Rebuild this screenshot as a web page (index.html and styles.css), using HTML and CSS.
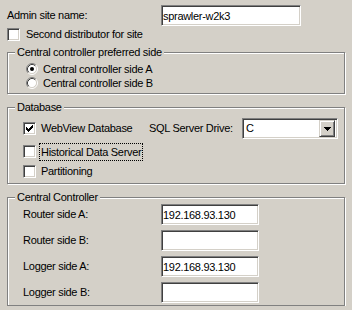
FILE: index.html
```html
<!DOCTYPE html>
<html lang="en">
<head>
  <meta charset="UTF-8" />
  <title>Admin site settings</title>
  <link rel="stylesheet" href="styles.css">
</head>
<body>
  <div class="dialog">
    <div class="row site-row">
      <span class="field-label wide">Admin site name:</span>
      <input class="edit site-name" type="text" value="sprawler-w2k3" />
    </div>

    <div class="row check-row first-check">
      <span class="check"></span>
      <span class="caption">Second distributor for site</span>
    </div>

    <div class="group side-group">
      <div class="group-title">Central controller preferred side</div>
      <div class="row radio-row">
        <span class="radio">
          <svg width="12" height="12" viewBox="0 0 12 12">
            <circle cx="6" cy="6" r="4.5" fill="#fff"/>
            <path d="M2.11 9.89A5.5 5.5 0 0 1 9.89 2.11" stroke="#808080" fill="none"/>
            <path d="M9.89 2.11A5.5 5.5 0 0 1 2.11 9.89" stroke="#fff" fill="none"/>
            <path d="M2.82 9.18A4.5 4.5 0 0 1 9.18 2.82" stroke="#404040" fill="none"/>
            <path d="M9.18 2.82A4.5 4.5 0 0 1 2.82 9.18" stroke="#d4d0c8" fill="none"/>
            <circle cx="6" cy="6" r="2" fill="#000"/>
          </svg>
        </span>
        <span class="caption">Central controller side A</span>
      </div>
      <div class="row radio-row">
        <span class="radio">
          <svg width="12" height="12" viewBox="0 0 12 12">
            <circle cx="6" cy="6" r="4.5" fill="#fff"/>
            <path d="M2.11 9.89A5.5 5.5 0 0 1 9.89 2.11" stroke="#808080" fill="none"/>
            <path d="M9.89 2.11A5.5 5.5 0 0 1 2.11 9.89" stroke="#fff" fill="none"/>
            <path d="M2.82 9.18A4.5 4.5 0 0 1 9.18 2.82" stroke="#404040" fill="none"/>
            <path d="M9.18 2.82A4.5 4.5 0 0 1 2.82 9.18" stroke="#d4d0c8" fill="none"/>
          </svg>
        </span>
        <span class="caption">Central controller side B</span>
      </div>
    </div>

    <div class="group db-group">
      <div class="group-title">Database</div>
      <div class="row db-row">
        <div class="db-check">
          <span class="check">
            <svg width="11" height="11" viewBox="0 0 11 11">
              <path d="M2 4h1v3h-1z M3 5h1v3h-1z M4 6h1v3h-1z M5 5h1v3h-1z M6 4h1v3h-1z M7 3h1v3h-1z M8 2h1v3h-1z" fill="#000"/>
            </svg>
          </span>
          <span class="caption">WebView Database</span>
        </div>
        <span class="drive-label">SQL Server Drive:</span>
        <div class="combo">
          <span class="combo-text">C</span>
          <span class="drop">
            <svg width="7" height="4" viewBox="0 0 7 4">
              <path d="M0 0h7v1h-7z M1 1h5v1h-5z M2 2h3v1h-3z M3 3h1v1h-1z" fill="#000"/>
            </svg>
          </span>
        </div>
      </div>
      <div class="row check-row historical">
        <span class="check"></span>
        <span class="caption focused">Historical Data Server</span>
      </div>
      <div class="row check-row partitioning">
        <span class="check"></span>
        <span class="caption">Partitioning</span>
      </div>
    </div>

    <div class="group cc-group">
      <div class="group-title">Central Controller</div>
      <div class="row cc-row">
        <span class="field-label">Router side A:</span>
        <input class="edit address" type="text" value="192.168.93.130" />
      </div>
      <div class="row cc-row">
        <span class="field-label">Router side B:</span>
        <input class="edit address" type="text" value="" />
      </div>
      <div class="row cc-row">
        <span class="field-label">Logger side A:</span>
        <input class="edit address" type="text" value="192.168.93.130" />
      </div>
      <div class="row cc-row">
        <span class="field-label">Logger side B:</span>
        <input class="edit address" type="text" value="" />
      </div>
    </div>
  </div>
</body>
</html>
```

FILE: styles.css
```css
* {
  box-sizing: border-box;
}

body {
  margin: 0;
  background-color: #d4d0c8;
  color: black;
  font-family: 'Liberation Sans', Arial, sans-serif;
  font-size: 11px;
  letter-spacing: -0.3px;
  line-height: 13px;
}

.dialog {
  padding: 0 7px;
}

.row {
  display: flex;
  align-items: center;
}

/* sunken edit box, win2k style */
.edit {
  height: 21px;
  margin: 0;
  padding: 0 0 0 1px;
  border: 1px solid;
  border-color: #808080 #fff #fff #808080;
  box-shadow: inset 1px 1px 0 #404040, inset -1px -1px 0 #d4d0c8;
  background: white;
  font: inherit;
  letter-spacing: inherit;
  color: black;
  outline: none;
}

.site-row {
  margin-top: 5px;
  height: 21px;
}

.field-label {
  width: 138px;
}

.field-label.wide {
  width: 154px;
}

.site-name {
  width: 140px;
}

.check {
  display: inline-block;
  width: 13px;
  height: 13px;
  flex: none;
  border: 1px solid;
  border-color: #808080 #fff #fff #808080;
  box-shadow: inset 1px 1px 0 #404040, inset -1px -1px 0 #d4d0c8;
  background: white;
}

.check svg {
  display: block;
}

.check-row {
  height: 13px;
}

.check-row .caption,
.db-check .caption {
  margin-left: 5px;
}

.first-check {
  margin-top: 2px;
}

.first-check .caption {
  margin-left: 6px;
}

.group {
  border: 1px solid #808080;
  box-shadow: inset 1px 1px 0 #fff, 1px 1px 0 #fff;
}

.group-title {
  display: table;
  margin: -7px 0 0 7px;
  padding: 0 2px;
  background: #d4d0c8;
  line-height: 13px;
}

.side-group {
  margin-top: 11px;
  padding-bottom: 4px;
}

.radio-row {
  height: 12px;
  padding-left: 18px;
  margin-top: 2px;
}

.side-group .group-title + .radio-row {
  margin-top: 4px;
}

.radio {
  width: 12px;
  height: 12px;
  flex: none;
}

.radio svg {
  display: block;
}

.radio-row .caption {
  margin-left: 5px;
}

.db-group {
  margin-top: 13px;
  padding-bottom: 5px;
}

.db-group .row {
  padding-left: 15px;
}

.db-row {
  margin-top: 4px;
  height: 21px;
}

.db-check {
  display: flex;
  align-items: center;
  width: 126px;
}

.drive-label {
  width: 93px;
}

.combo {
  display: flex;
  justify-content: space-between;
  align-items: center;
  width: 96px;
  height: 21px;
  padding: 2px;
  border: 1px solid;
  border-color: #808080 #fff #fff #808080;
  box-shadow: inset 1px 1px 0 #404040, inset -1px -1px 0 #d4d0c8;
  background: white;
}

.combo-text {
  padding-left: 1px;
}

.drop {
  display: flex;
  align-items: center;
  justify-content: center;
  width: 16px;
  height: 17px;
  border: 1px solid;
  border-color: #d4d0c8 #404040 #404040 #d4d0c8;
  box-shadow: inset 1px 1px 0 #fff, inset -1px -1px 0 #808080;
  background: #d4d0c8;
}

.drop svg {
  display: block;
}

.historical {
  margin-top: 6px;
}

.partitioning {
  margin-top: 7px;
}

.check-row .focused {
  margin-left: 4px;
  padding: 1px;
  line-height: 14px;
  outline: 1px dotted black;
}

.cc-group {
  margin-top: 13px;
  padding-bottom: 2px;
}

.cc-row {
  height: 21px;
  padding-left: 15px;
  margin-bottom: 5px;
}

.cc-row:last-child {
  margin-bottom: 0;
}

.address {
  width: 98px;
}
```
